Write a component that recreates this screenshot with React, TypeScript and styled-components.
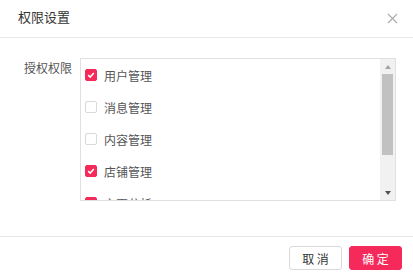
import { createGlobalStyle, styled } from "styled-components";

const GlobalStyle = createGlobalStyle`
  *, *::before, *::after {
    box-sizing: border-box;
  }
  html, body {
    margin: 0;
    padding: 0;
    background: #fff;
    font-family: "Noto Sans CJK SC", "Noto Sans", sans-serif;
  }
`;

const Dialog = styled.div`
  width: 413px;
  height: 276px;
  display: flex;
  flex-direction: column;
  background: #fff;
`;

const Header = styled.div`
  height: 38px;
  border-bottom: 1px solid #e8e8e8;
  display: flex;
  align-items: center;
  justify-content: space-between;
  padding: 0 15px 0 18px;
`;

const Title = styled.span`
  font-size: 13px;
  color: #333;
  line-height: 20px;
  margin-top: -3px;
`;

const CloseButton = styled.button`
  border: none;
  background: none;
  padding: 0;
  width: 11px;
  height: 11px;
  display: flex;
  cursor: pointer;
  margin-top: -1px;
`;

const Body = styled.div`
  flex: 1;
  display: flex;
  align-items: flex-start;
  padding: 20px 0 0 24px;
`;

const Label = styled.span`
  width: 48px;
  margin-right: 8px;
  font-size: 12px;
  line-height: 20px;
  color: #555;
`;

const ListBox = styled.div`
  width: 316px;
  height: 143px;
  border: 1px solid #e0e0e0;
  display: flex;
`;

const ItemList = styled.div`
  flex: 1;
  overflow: hidden;
`;

const ScrollBar = styled.div`
  width: 15px;
  background: #f1f1f1;
  display: flex;
  flex-direction: column;
`;

const Arrow = styled.div<{ $down?: boolean }>`
  height: 15px;
  display: flex;
  align-items: center;
  justify-content: center;

  &::after {
    content: "";
    width: 0;
    height: 0;
    border-left: 3.5px solid transparent;
    border-right: 3.5px solid transparent;
    ${(p) =>
      p.$down
        ? "border-top: 4px solid #505050;"
        : "border-bottom: 4px solid #a3a3a3;"}
  }
`;

const Track = styled.div`
  flex: 1;
`;

const Thumb = styled.div`
  height: 81px;
  margin: 0 2px;
  background: #c1c1c1;
`;

const Row = styled.label`
  height: 32px;
  display: flex;
  align-items: center;
  padding-left: 4px;
  font-size: 12px;
  color: #555;
  cursor: pointer;
`;

const Box = styled.span<{ $checked: boolean }>`
  width: 12px;
  height: 12px;
  flex-shrink: 0;
  border-radius: 2px;
  margin-right: 7px;
  display: flex;
  align-items: center;
  justify-content: center;
  background: ${(p) => (p.$checked ? "#f52a5a" : "#fff")};
  border: 1px solid ${(p) => (p.$checked ? "#f52a5a" : "#d9d9d9")};
`;

const Footer = styled.div`
  height: 40px;
  border-top: 1px solid #e8e8e8;
  display: flex;
  justify-content: flex-end;
  align-items: flex-start;
  gap: 7px;
  padding: 9px 11px 0 0;
`;

const Button = styled.button<{ $primary?: boolean }>`
  height: 24px;
  width: 53px;
  border-radius: 3px;
  font-family: inherit;
  font-size: 12px;
  padding: 0;
  cursor: pointer;
  color: ${(p) => (p.$primary ? "#fff" : "#333")};
  background: ${(p) => (p.$primary ? "#f52a5a" : "#fff")};
  border: 1px solid ${(p) => (p.$primary ? "#f52a5a" : "#d9d9d9")};
`;

const items = [
  { name: "用户管理", checked: true },
  { name: "消息管理", checked: false },
  { name: "内容管理", checked: false },
  { name: "店铺管理", checked: true },
  { name: "主页分析", checked: true },
  { name: "数据统计", checked: false },
];

export default function App() {
  return (
    <>
      <GlobalStyle />
      <Dialog>
        <Header>
          <Title>权限设置</Title>
          <CloseButton>
            <svg width="11" height="11" viewBox="0 0 11 11">
              <path d="M1 1L10 10M10 1L1 10" stroke="#aaa" strokeWidth="1.1" />
            </svg>
          </CloseButton>
        </Header>
        <Body>
          <Label>授权权限</Label>
          <ListBox>
            <ItemList>
              {items.map((item) => (
                <Row key={item.name}>
                  <Box $checked={item.checked}>
                    {item.checked && (
                      <svg width="8" height="8" viewBox="0 0 8 8">
                        <path
                          d="M1.2 4.2L3.2 6L6.8 2"
                          stroke="#fff"
                          strokeWidth="1.6"
                          fill="none"
                        />
                      </svg>
                    )}
                  </Box>
                  {item.name}
                </Row>
              ))}
            </ItemList>
            <ScrollBar>
              <Arrow />
              <Track>
                <Thumb />
              </Track>
              <Arrow $down />
            </ScrollBar>
          </ListBox>
        </Body>
        <Footer>
          <Button>取 消</Button>
          <Button $primary>确 定</Button>
        </Footer>
      </Dialog>
    </>
  );
}
